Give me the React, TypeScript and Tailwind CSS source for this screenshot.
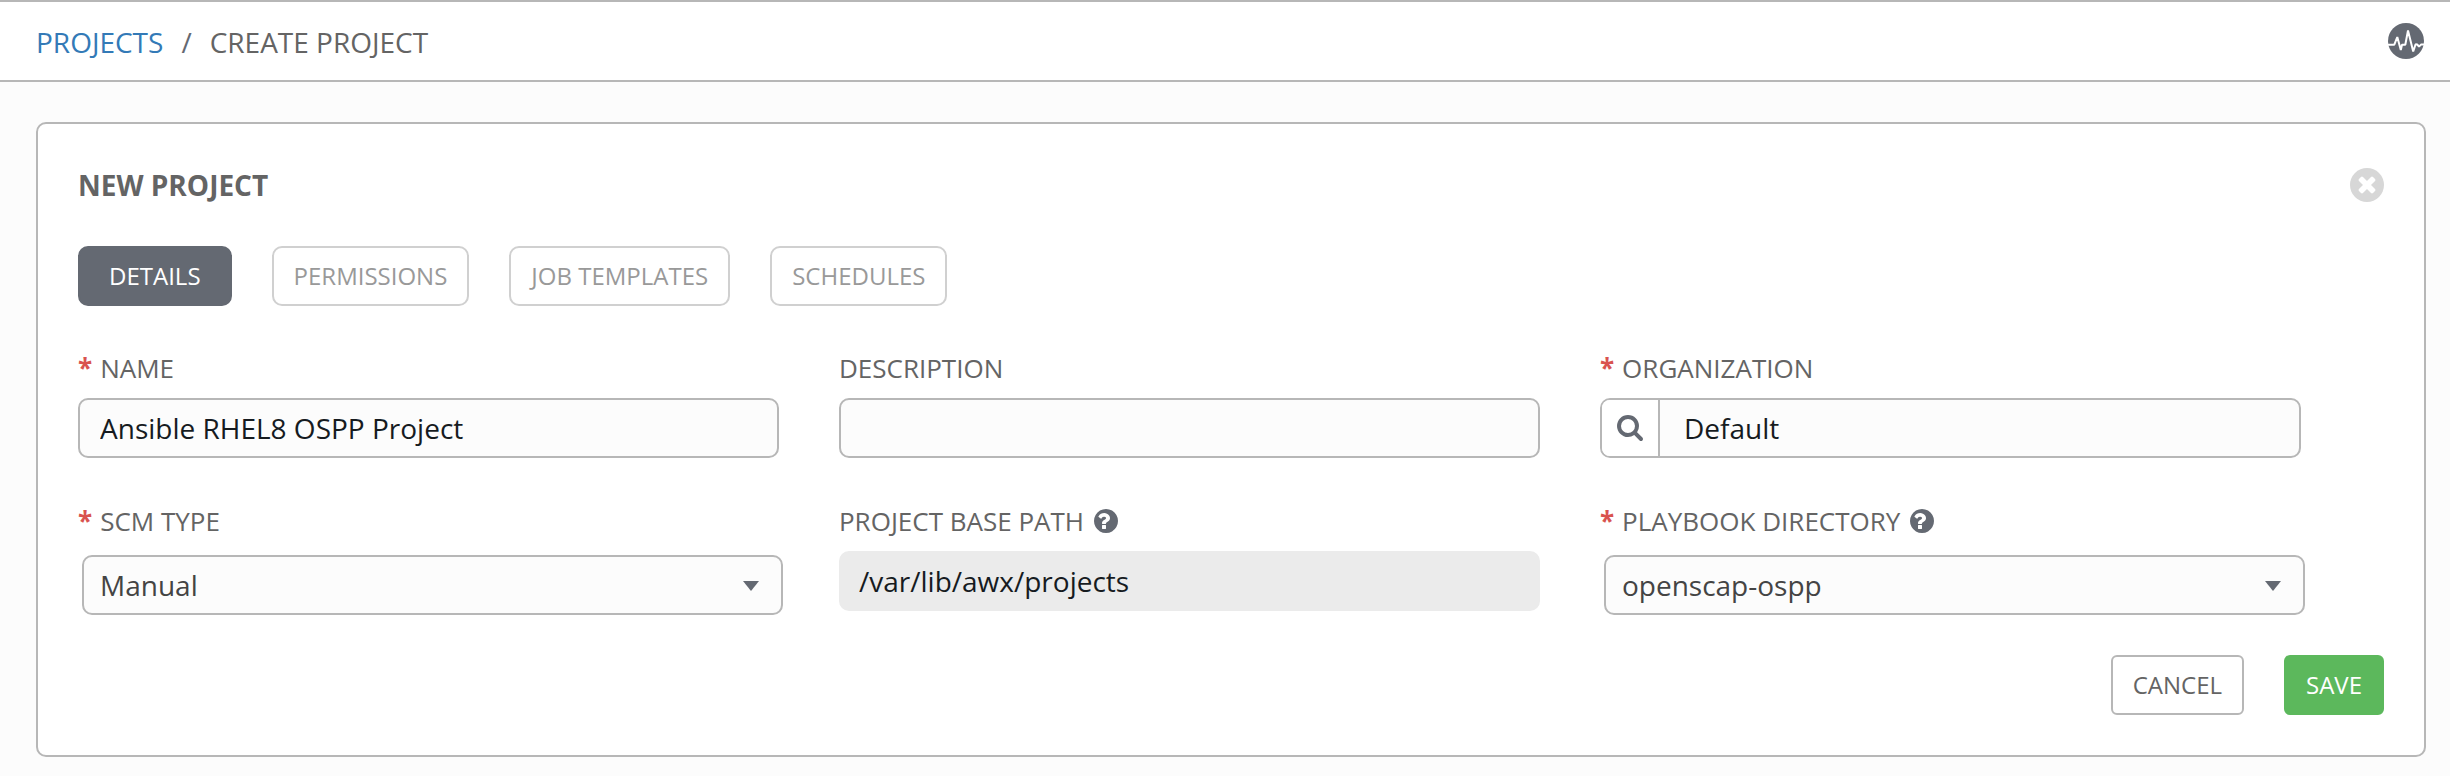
import { useState } from "react";
import type { ReactNode } from "react";

const tabs = ["DETAILS", "PERMISSIONS", "JOB TEMPLATES", "SCHEDULES"];

const control =
  "block h-[60px] w-full rounded-[10px] border-2 border-[#b7b7b7] bg-[#fcfcfc] px-5 text-[28px] leading-[40px] text-[#161b1f] outline-none";

function ActivityIcon() {
  return (
    <svg viewBox="0 0 36 36" className="size-9" aria-hidden="true">
      <circle cx="18" cy="18" r="18" fill="#646972" />
      <path
        d="M0 21.700h6.300l3-7.700 3.500 13 1.200-5.300h3.300L20 7.500l5.200 21 2.400-7.300 1.600 0.200 1.800 2.200 2-2h3"
        fill="none"
        stroke="#fff"
        strokeWidth="2"
        strokeLinejoin="bevel"
      />
    </svg>
  );
}

function HelpIcon() {
  return (
    <svg viewBox="128 128 1536 1536" className="size-6" fill="currentColor" aria-hidden="true">
      <path d="M896 1376v-192q0-14-9-23t-23-9h-192q-14 0-23 9t-9 23v192q0 14 9 23t23 9h192q14 0 23-9t9-23zm256-672q0-88-55.500-163t-138.500-116-170-41q-243 0-371 213-15 24 8 42l132 100q7 6 19 6 16 0 25-12 53-68 86-92 34-24 86-24 48 0 85.500 26t37.500 59q0 38-20 61t-68 45q-63 28-115.500 86.500t-52.500 125.500v36q0 14 9 23t23 9h192q14 0 23-9t9-23q0-19 21.500-49.500t54.500-49.500q32-18 49-28.500t46-35 44.500-48 28-60.500 12.500-81zm512 192q0 209-103 385.500t-279.500 279.500-385.500 103-385.500-103-279.500-279.500-103-385.500 103-385.500 279.500-279.500 385.500-103 385.500 103 279.500 279.500 103 385.500z" transform="translate(0 0)" />
    </svg>
  );
}

function CloseIcon() {
  return (
    <svg viewBox="128 128 1536 1536" className="size-[34px]" aria-hidden="true">
      <circle cx="896" cy="896" r="768" fill="#d7d7d7" />
      <path
        d="M1277 1122q0-26-19-45l-181-181 181-181q19-19 19-45 0-27-19-46l-90-90q-19-19-46-19-26 0-45 19l-181 181-181-181q-19-19-45-19-27 0-46 19l-90 90q-19 19-19 46 0 26 19 45l181 181-181 181q-19 19-19 45 0 27 19 46l90 90q19 19 46 19 26 0 45-19l181-181 181 181q19 19 45 19 27 0 46-19l90-90q19-19 19-46z"
        fill="#fff"
      />
    </svg>
  );
}

function SearchIcon() {
  return (
    <svg viewBox="64 128 1664 1664" className="size-[26px]" fill="currentColor" aria-hidden="true">
      <path d="M1216 832q0-185-131.500-316.500t-316.500-131.500-316.500 131.500-131.500 316.500 131.500 316.500 316.500 131.500 316.500-131.500 131.500-316.500zm512 832q0 52-38 90t-90 38q-54 0-90-38l-343-342q-179 124-399 124-143 0-273.500-55.500t-225-150-150-225-55.500-273.500 55.500-273.500 150-225 225-150 273.500-55.500 273.500 55.500 225 150 150 225 55.500 273.500q0 220-124 399l343 343q37 37 37 90z" />
    </svg>
  );
}

type FieldProps = {
  id: string;
  label: string;
  required?: boolean;
  help?: boolean;
  children: ReactNode;
};

function Field({ id, label, required, help, children }: FieldProps) {
  return (
    <div className="w-[33%] pr-[60px]">
      <div className="mb-3 flex h-9 items-center">
        <label htmlFor={id} className="flex items-center gap-2 text-[26px] leading-9 text-[#646464]">
          {required && <span className="font-bold text-[#d9534f]">*</span>}
          {label}
        </label>
        {help && (
          <button type="button" aria-label={`Help for ${label}`} className="ml-2.5 text-[#646972]">
            <HelpIcon />
          </button>
        )}
      </div>
      {children}
    </div>
  );
}

function Select({ id, option }: { id: string; option: string }) {
  return (
    <div className="relative mt-4 -mr-1 ml-1">
      <select
        id={id}
        className="block h-[60px] w-full appearance-none rounded-[10px] border-2 border-[#b7b7b7] bg-[#fcfcfc] px-4 text-[28px] leading-[40px] text-[#444] outline-none"
      >
        <option>{option}</option>
      </select>
      <svg
        viewBox="0 0 16 10"
        className="pointer-events-none absolute top-[26px] right-6 h-[10px] w-4"
        aria-hidden="true"
      >
        <path d="M0 0h16L8 10z" fill="#646972" />
      </svg>
    </div>
  );
}

export default function App() {
  const [active, setActive] = useState("DETAILS");
  return (
    <div className="min-h-screen bg-[#fcfcfc] font-['Open_Sans',sans-serif]">
      <header className="flex h-[82px] items-center justify-between border-y-2 border-[#b7b7b7] bg-white pr-[26px] pl-9">
        <nav aria-label="Breadcrumb" className="flex items-center gap-[18px] pt-0.5 text-[28px] leading-10 text-[#646464]">
          <a href="#projects" className="text-[#337ab7]">
            PROJECTS
          </a>
          <span className="text-[#646972]">/</span>
          <span>CREATE PROJECT</span>
        </nav>
        <button type="button" aria-label="Activity stream">
          <ActivityIcon />
        </button>
      </header>

      <main className="pt-10 pr-6 pb-4 pl-9">
        <section className="rounded-[10px] border-2 border-[#b7b7b7] bg-white p-10">
          <div className="flex h-[42px] items-center justify-between">
            <h1 className="text-[28px] leading-10 font-bold text-[#646464]">NEW PROJECT</h1>
            <button type="button" aria-label="Close">
              <CloseIcon />
            </button>
          </div>

          <div className="mt-10 flex gap-10">
            {tabs.map((tab) => (
              <button
                key={tab}
                type="button"
                onClick={() => setActive(tab)}
                className={
                  tab === active
                    ? "h-[60px] rounded-[10px] border-2 border-[#646972] bg-[#646972] px-[29px] text-[24px] leading-9 text-white"
                    : "h-[60px] rounded-[10px] border-2 border-[#d0d0d0] bg-white px-5 text-[24px] leading-9 text-[#999999]"
                }
              >
                {tab}
              </button>
            ))}
          </div>

          <form onSubmit={(e) => e.preventDefault()}>
            <div className="mt-11 flex">
              <Field id="name" label="NAME" required>
                <input id="name" type="text" defaultValue="Ansible RHEL8 OSPP Project" className={control} />
              </Field>
              <Field id="description" label="DESCRIPTION">
                <input id="description" type="text" className={control} />
              </Field>
              <Field id="organization" label="ORGANIZATION" required>
                <div className="flex h-[60px] overflow-hidden rounded-[10px] border-2 border-[#b7b7b7] bg-[#fcfcfc]">
                  <button
                    type="button"
                    aria-label="Look up organization"
                    className="flex w-[58px] shrink-0 items-center justify-center border-r-2 border-[#b7b7b7] bg-white text-[#646972]"
                  >
                    <SearchIcon />
                  </button>
                  <input
                    id="organization"
                    type="text"
                    defaultValue="Default"
                    className="min-w-0 flex-1 px-6 text-[28px] leading-[40px] text-[#161b1f] outline-none"
                  />
                </div>
              </Field>
            </div>

            <div className="mt-[45px] flex">
              <Field id="scm-type" label="SCM TYPE" required>
                <Select id="scm-type" option="Manual" />
              </Field>
              <Field id="base-path" label="PROJECT BASE PATH" help>
                <input
                  id="base-path"
                  type="text"
                  readOnly
                  defaultValue="/var/lib/awx/projects"
                  className="block h-[60px] w-full rounded-[10px] bg-[#ebebeb] px-5 text-[28px] leading-[40px] text-[#161b1f] outline-none"
                />
              </Field>
              <Field id="playbook-directory" label="PLAYBOOK DIRECTORY" required help>
                <Select id="playbook-directory" option="openscap-ospp" />
              </Field>
            </div>

            <div className="mt-10 flex justify-end gap-10">
              <button
                type="button"
                className="h-[60px] rounded-md border-2 border-[#b7b7b7] bg-white px-5 text-[24px] leading-9 text-[#646464]"
              >
                CANCEL
              </button>
              <button
                type="submit"
                className="h-[60px] rounded-md border-2 border-[#5cb85c] bg-[#5cb85c] px-5 text-[24px] leading-9 text-white"
              >
                SAVE
              </button>
            </div>
          </form>
        </section>
      </main>
    </div>
  );
}
